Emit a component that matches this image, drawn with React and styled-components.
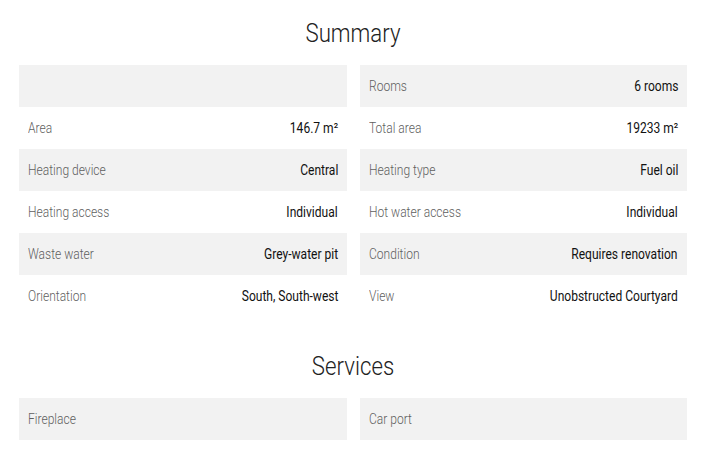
import React from "react";
import styled, { createGlobalStyle } from "styled-components";

const Global = createGlobalStyle`
  html, body { margin: 0; padding: 0; background: #fff; }
  body { font-family: Roboto, "Liberation Sans", sans-serif; }
`;

const Page = styled.div`
  width: 668px;
  margin-left: 19px;
  padding-top: 17px;
`;

const Section = styled.section`
  margin-bottom: ${(p) => p.$mb || 0}px;
`;

const Title = styled.h2`
  margin: 0 0 14px;
  text-align: center;
  font-weight: 300;
  font-size: 25px;
  line-height: 34px;
  color: #222;
  transform: scaleX(0.89);
`;

const Columns = styled.div`
  display: grid;
  grid-template-columns: 328px 327px;
  column-gap: 13px;
`;

const Column = styled.div`
  display: flex;
  flex-direction: column;
`;

const Row = styled.div`
  height: 42px;
  display: flex;
  align-items: center;
  justify-content: space-between;
  padding: 0 9px;
  background: ${(p) => (p.$shade ? "#f2f2f2" : "#fff")};
  font-size: 14px;
`;

const Label = styled.span`
  display: inline-block;
  color: #5f5f5f;
  font-weight: 300;
  transform: scaleX(0.86);
  transform-origin: left center;
  white-space: nowrap;
`;

const Value = styled.span`
  display: inline-block;
  color: #111;
  font-weight: 400;
  transform: scaleX(0.86);
  transform-origin: right center;
  white-space: nowrap;
`;

const left = [
  null,
  ["Area", "146.7 m²"],
  ["Heating device", "Central"],
  ["Heating access", "Individual"],
  ["Waste water", "Grey-water pit"],
  ["Orientation", "South, South-west"],
];
const right = [
  ["Rooms", "6 rooms"],
  ["Total area", "19233 m²"],
  ["Heating type", "Fuel oil"],
  ["Hot water access", "Individual"],
  ["Condition", "Requires renovation"],
  ["View", "Unobstructed Courtyard"],
];

const renderCol = (items) => (
  <Column>
    {items.map((it, i) => (
      <Row key={i} $shade={i % 2 === 0}>
        {it && (
          <>
            <Label>{it[0]}</Label>
            <Value>{it[1]}</Value>
          </>
        )}
      </Row>
    ))}
  </Column>
);

export default function App() {
  return (
    <Page>
      <Global />
      <Section $mb={33}>
        <Title>Summary</Title>
        <Columns>
          {renderCol(left)}
          {renderCol(right)}
        </Columns>
      </Section>
      <Section>
        <Title>Services</Title>
        <Columns>
          <Column>
            <Row $shade><Label>Fireplace</Label></Row>
          </Column>
          <Column>
            <Row $shade><Label>Car port</Label></Row>
          </Column>
        </Columns>
      </Section>
    </Page>
  );
}
